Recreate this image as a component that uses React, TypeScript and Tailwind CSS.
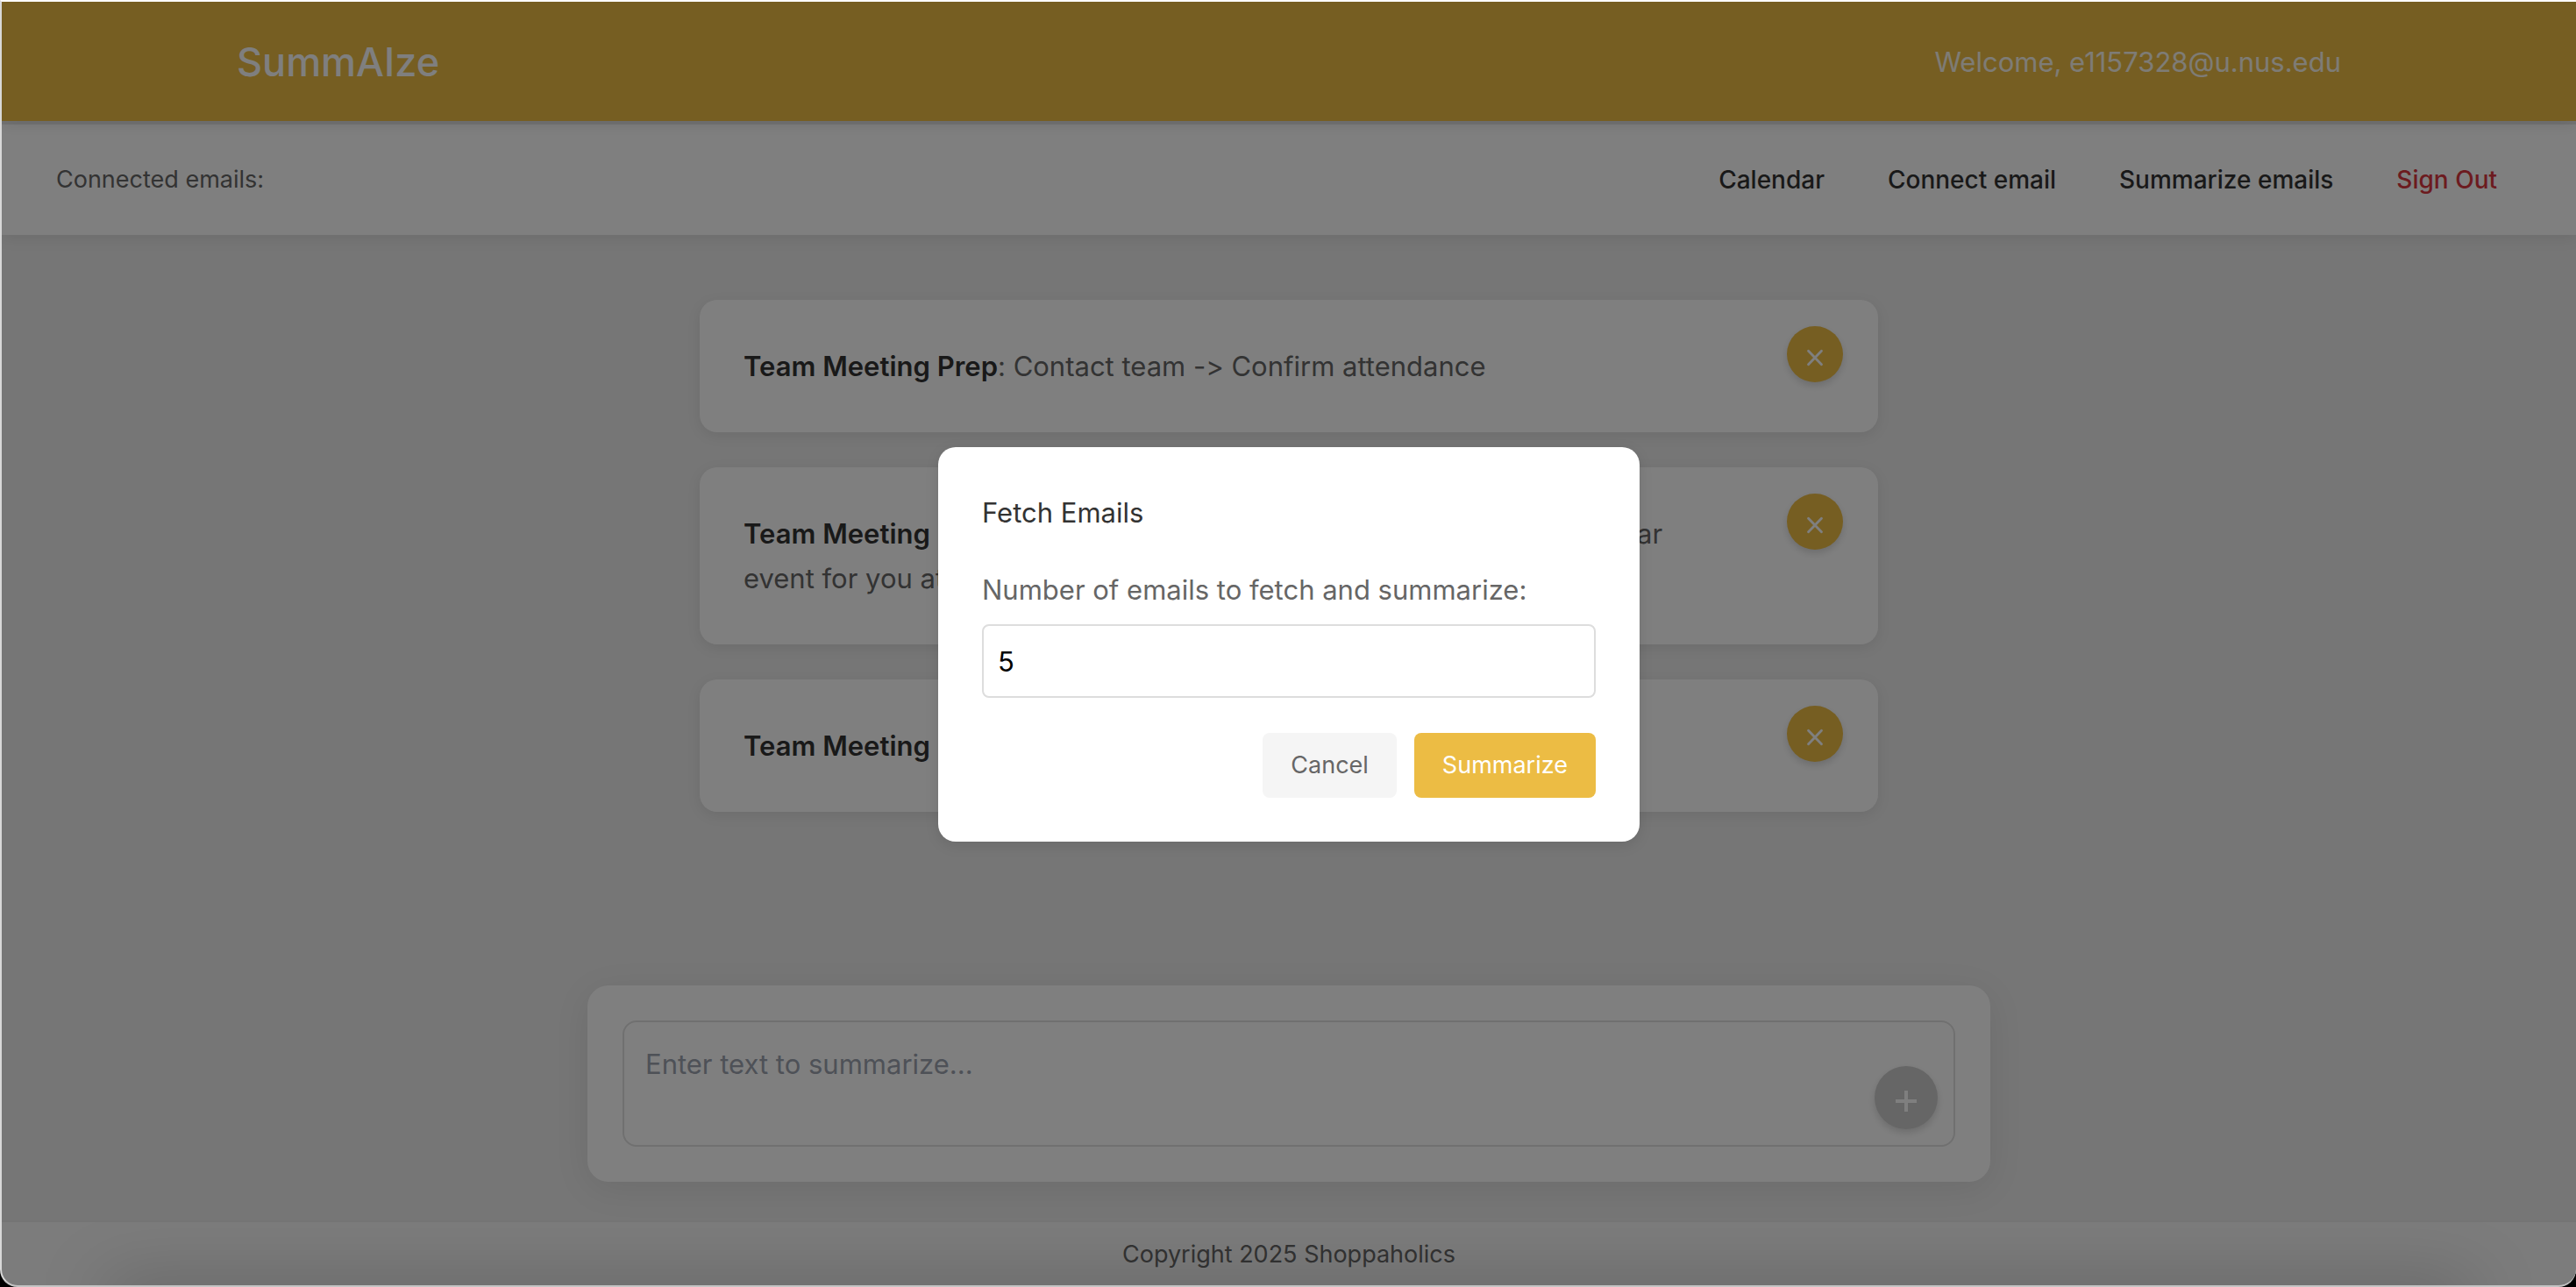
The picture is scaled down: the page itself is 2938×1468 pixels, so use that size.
import { useState, type ReactNode } from "react";

const navLinks = ["Calendar", "Connect email", "Summarize emails"];

type Summary = { id: number; title: string; body: string };

const summaries: Summary[] = [
  { id: 1, title: "Team Meeting Prep", body: "Contact team -> Confirm attendance" },
  {
    id: 2,
    title: "Team Meeting Prep",
    body: "Would you like us to create a new Google calendar event for you at this time?",
  },
  { id: 3, title: "Team Meeting Prep", body: "Review the agenda" },
];

function Header() {
  return (
    <header className="relative z-10 bg-[#ecbc44] shadow-[0_4px_16px_rgba(0,0,0,0.1)]">
      <div className="mx-auto flex h-[136px] max-w-[2400px] items-center justify-between pt-0.5 text-white">
        <h1 className="text-[45px] leading-[72px] font-medium">SummAIze</h1>
        <p className="text-[31px] leading-[48px] text-white/90">Welcome, e1157328@u.nus.edu</p>
      </div>
    </header>
  );
}

function NavBar() {
  return (
    <div className="mt-1 flex h-[126px] items-center justify-between bg-white pr-[90px] pl-[62px] leading-[42px] shadow-[0_4px_16px_rgba(0,0,0,0.08)]">
      <span className="text-[27px] text-[#666]">Connected emails:</span>
      <nav className="flex gap-18 text-[28px] font-medium">
        {navLinks.map((label) => (
          <a key={label} href="#" className="text-[#333]">
            {label}
          </a>
        ))}
        <a href="#" className="text-[#d9363e]">
          Sign Out
        </a>
      </nav>
    </div>
  );
}

function SummaryCard({ title, children }: { title: string; children: ReactNode }) {
  return (
    <li className="relative rounded-[20px] bg-white py-[50px] pr-[200px] pl-[50px] text-[31px] leading-[51px] text-[#666] shadow-[0_4px_16px_rgba(0,0,0,0.08)]">
      <strong className="font-semibold text-[#333]">{title}</strong>: {children}
      <button
        type="button"
        aria-label="Dismiss"
        className="absolute top-[30px] right-10 flex size-16 items-center justify-center rounded-full bg-[#ecbc44] pt-2 text-white shadow-[0_4px_8px_rgba(0,0,0,0.15)]"
      >
        <svg viewBox="0 0 20 20" className="size-5" fill="none" stroke="currentColor" strokeWidth="2.8" strokeLinecap="round">
          <path d="M2.5 2.2 17.5 17.8M17.5 2.2 2.5 17.8" />
        </svg>
      </button>
    </li>
  );
}

function Composer() {
  return (
    <form className="mx-auto w-full max-w-[1600px] rounded-3xl bg-white p-10 shadow-[0_8px_40px_rgba(0,0,0,0.08)]">
      <div className="relative">
        <textarea
          aria-label="Text to summarize"
          placeholder="Enter text to summarize..."
          className="block h-36 w-full resize-none rounded-2xl border-2 border-[#e0e0e0] px-6 py-[22px] text-[31px] leading-[51px] text-[#333] placeholder:text-[#9ca3af]"
        />
        <button
          type="button"
          aria-label="Add"
          className="absolute right-5 bottom-5 flex size-18 items-center justify-center rounded-full bg-[#ccc] pt-2 text-white shadow-[0_4px_8px_rgba(0,0,0,0.15)]"
        >
          <svg viewBox="0 0 24 24" className="size-6" fill="none" stroke="currentColor" strokeWidth="4">
            <path d="M12 0v24M0 12h24" />
          </svg>
        </button>
      </div>
    </form>
  );
}

function FetchDialog() {
  const [count, setCount] = useState("5");
  return (
    <div className="absolute inset-0 z-20 flex items-center justify-center bg-black/50 pt-0.5">
      <div
        role="dialog"
        aria-labelledby="fetch-title"
        className="w-[800px] rounded-[20px] bg-white p-[50px] shadow-[0_4px_16px_rgba(0,0,0,0.1)]"
      >
        <h2 id="fetch-title" className="text-[31px] leading-[50px] text-[#333]">
          Fetch Emails
        </h2>
        <label htmlFor="fetch-count" className="mt-[38px] block text-[31px] leading-[50px] text-[#666]">
          Number of emails to fetch and summarize:
        </label>
        <input
          id="fetch-count"
          type="text"
          inputMode="numeric"
          value={count}
          onChange={(event) => setCount(event.target.value)}
          className="mt-[14px] block h-[84px] w-full rounded-lg border-2 border-[#ddd] px-4 text-[31px] text-black"
        />
        <div className="mt-10 flex justify-end gap-5 text-[27px] leading-[42px]">
          <button type="button" className="rounded-lg bg-[#f5f5f5] px-8 py-4 text-[#666]">
            Cancel
          </button>
          <button type="button" className="rounded-lg bg-[#ecbc44] px-8 py-4 text-white">
            Summarize
          </button>
        </div>
      </div>
    </div>
  );
}

export default function App() {
  return (
    <div className="flex min-h-screen flex-col bg-black font-['Inter',sans-serif] [font-feature-settings:'calt'_0]">
      <div className="relative flex grow flex-col overflow-hidden rounded-b-[20px] border-y-2 border-l-2 border-t-white border-b-[#c4c4c4] border-l-[#d8d8d8] bg-[#ececec]">
        <Header />
        <NavBar />
        <main className="flex grow flex-col justify-between pt-[74px] pb-11">
          <ul className="mx-auto flex w-full max-w-[1344px] flex-col gap-10">
            {summaries.map((item) => (
              <SummaryCard key={item.id} title={item.title}>
                {item.body}
              </SummaryCard>
            ))}
          </ul>
          <Composer />
        </main>
        <footer className="relative overflow-hidden border-t-2 border-[#e8e8e8] bg-[#f8f8f8] pt-[17px] pb-[15px] text-center text-[27px] leading-[40px] text-[#666]">
          <div aria-hidden="true" className="absolute inset-x-30 top-full h-10 shadow-[0_0_80px_rgba(0,0,0,0.25)]" />
          Copyright 2025 Shoppaholics
        </footer>
        <FetchDialog />
      </div>
    </div>
  );
}
